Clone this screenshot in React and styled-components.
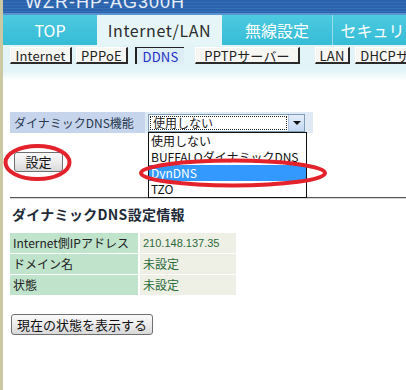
import React from 'react';
import styled, { createGlobalStyle } from 'styled-components';

const GlobalStyle = createGlobalStyle`
  body {
    margin: 0;
    background: #ffffff;
    font-family: "Noto Sans CJK JP", "Noto Sans", sans-serif;
    color: #222;
  }
`;

const Page = styled.div`
  position: relative;
  width: 406px;
  height: 390px;
  overflow: hidden;
  box-sizing: border-box;
  border-left: 3px solid #cbc8a4;
  background: #fff;
`;

const Header = styled.div`
  height: 13px;
  overflow: hidden;
  background: repeating-linear-gradient(
    180deg,
    #2c62ac 0px,
    #2c62ac 2px,
    #3670b6 2px,
    #3670b6 3px
  );
  border-bottom: 2px solid #5a94d0;
`;

const HeaderTitle = styled.div`
  margin: -8px 0 0 22px;
  font-family: "Liberation Sans", Arial, sans-serif;
  font-size: 18px;
  line-height: 20px;
  color: #e8eef8;
  letter-spacing: 1px;
  white-space: nowrap;
`;

const TabBar = styled.div`
  display: flex;
  height: 30px;
  background: #3ec2da;
`;

const Tab = styled.div`
  flex: 0 0 ${p => p.w}px;
  display: flex;
  align-items: center;
  justify-content: center;
  font-size: 16px;
  line-height: 18px;
  letter-spacing: ${p => (p.active ? '0.6px' : '0')};
  color: ${p => (p.active ? '#2c2c2c' : '#ffffff')};
  background: ${p =>
    p.active ? '#e6f6f8' : 'linear-gradient(180deg, #4ccae0 0%, #36bcd6 100%)'};
  border-right: ${p => (p.sep ? '1px solid #9adcea' : 'none')};
  white-space: nowrap;
  overflow: hidden;
`;

const SubBar = styled.div`
  height: 36px;
  padding: 2px 0 0 7px;
  box-sizing: border-box;
  display: flex;
  align-items: flex-start;
  overflow: hidden;
  background: linear-gradient(180deg, #e2f4f8 0%, #e2f4f8 70%, #ffffff 100%);
`;

const SubTab = styled.div`
  flex: 0 0 ${p => p.w}px;
  margin-left: ${p => p.ml || 0}px;
  height: 17px;
  box-sizing: border-box;
  display: flex;
  align-items: center;
  justify-content: center;
  font-size: 13px;
  line-height: 13px;
  letter-spacing: 0.2px;
  white-space: nowrap;
  color: ${p => (p.active ? '#1d2fc8' : '#222')};
  background: ${p => (p.active ? '#dcedf4' : '#f6f6f2')};
  border-style: solid;
  border-width: ${p => (p.active ? '1px 0 0 2px' : '1px 2px 2px 1px')};
  border-color: ${p => (p.active ? '#222' : '#fff #2a2a2a #2a2a2a #fff')};
`;

const Content = styled.div`
  padding: 31px 0 0 7px;
`;

const FormRow = styled.div`
  position: relative;
  display: flex;
  height: 21px;
`;

const LabelCell = styled.div`
  width: 135px;
  display: flex;
  align-items: center;
  padding-left: 4px;
  box-sizing: border-box;
  background: #c6d5ec;
  color: #283850;
  font-size: 12px;
  line-height: 14px;
  white-space: nowrap;
`;

const ValueCell = styled.div`
  width: 168px;
  display: flex;
  align-items: center;
  padding-left: 3px;
  box-sizing: border-box;
  background: #dfeaf6;
`;

const Select = styled.div`
  width: 157px;
  height: 18px;
  display: flex;
  box-sizing: border-box;
  border: 1px solid #7f9db9;
  background: #fff;
`;

const SelectText = styled.div`
  flex: 1;
  margin: 1px;
  padding-left: 2px;
  display: flex;
  align-items: center;
  font-size: 12px;
  line-height: 14px;
  border: 1px dotted #222;
`;

const SelectArrow = styled.div`
  width: 15px;
  display: flex;
  align-items: center;
  justify-content: center;
  background: linear-gradient(180deg, #e4eefa 0%, #c4d8f2 100%);
  border-left: 1px solid #b0c4e0;
`;

const Triangle = styled.div`
  width: 0;
  height: 0;
  border-left: 4px solid transparent;
  border-right: 4px solid transparent;
  border-top: 4px solid #111;
`;

const DropList = styled.div`
  position: absolute;
  left: 138px;
  top: 20px;
  width: 159px;
  box-sizing: border-box;
  border: 1px solid #111;
  background: #fff;
  z-index: 2;
`;

const DropItem = styled.div`
  height: 16px;
  padding-left: 2px;
  display: flex;
  align-items: center;
  font-size: 12px;
  line-height: 14px;
  white-space: nowrap;
  overflow: hidden;
  color: ${p => (p.hl ? '#fff' : '#111')};
  background: ${p => (p.hl ? '#3399ff' : '#fff')};
`;

const GrayButton = styled.button`
  display: flex;
  align-items: center;
  justify-content: center;
  width: ${p => p.w}px;
  height: ${p => p.h}px;
  margin: ${p => p.m};
  padding: 0;
  font-family: "Noto Sans CJK JP", sans-serif;
  font-size: 13px;
  line-height: 14px;
  color: #111;
  border: 1px solid #707070;
  border-radius: 3px;
  background: linear-gradient(180deg, #fafafa 0%, #ececec 50%, #d8d8d8 100%);
`;

const Rule = styled.div`
  margin-top: 25px;
  height: 1px;
  background: #555;
  border-bottom: 1px solid #d8d8d8;
`;

const Heading = styled.div`
  margin: 6px 0 0 2px;
  font-size: 14px;
  line-height: 18px;
  font-weight: bold;
  color: #1e2a38;
  letter-spacing: 0.3px;
  white-space: nowrap;
`;

const InfoTable = styled.div`
  margin-top: 10px;
  display: grid;
  grid-template-columns: 128px 96px;
  gap: 1px 2px;
  width: 226px;
`;

const Key = styled.div`
  height: 20px;
  display: flex;
  align-items: center;
  padding-left: 3px;
  background: #bfe3cb;
  font-size: 12px;
  line-height: 14px;
  white-space: nowrap;
  color: #222;
`;

const Val = styled.div`
  height: 20px;
  display: flex;
  align-items: center;
  padding-left: 3px;
  background: #eef0e6;
  white-space: nowrap;
  font-size: ${p => (p.small ? 11 : 12)}px;
  line-height: 14px;
  font-family: ${p => (p.small ? '"Liberation Sans", Arial, sans-serif' : 'inherit')};
  color: #2b6a3a;
`;

const Marks = styled.svg`
  position: absolute;
  left: -3px;
  top: 0;
  pointer-events: none;
  z-index: 5;
`;

const subTabs = [
  { label: 'Internet', w: 62, ml: 0 },
  { label: 'PPPoE', w: 52, ml: 4 },
  { label: 'DDNS', w: 49, ml: 7, active: true },
  { label: 'PPTPサーバー', w: 105, ml: 11 },
  { label: 'LAN', w: 35, ml: 15 },
  { label: 'DHCPサーバー', w: 100, ml: 5 },
];

const rows = [
  { k: 'Internet側IPアドレス', v: '210.148.137.35', small: true },
  { k: 'ドメイン名', v: '未設定' },
  { k: '状態', v: '未設定' },
];

export default function App() {
  return (
    <>
      <GlobalStyle />
      <Page>
        <Header>
          <HeaderTitle>WZR-HP-AG300H</HeaderTitle>
        </Header>
        <TabBar>
          <Tab w={94}>TOP</Tab>
          <Tab w={125} active>
            Internet/LAN
          </Tab>
          <Tab w={110} sep>
            無線設定
          </Tab>
          <Tab w={110}>セキュリティ</Tab>
        </TabBar>
        <SubBar>
          {subTabs.map(t => (
            <SubTab key={t.label} w={t.w} ml={t.ml} active={t.active}>
              {t.label}
            </SubTab>
          ))}
        </SubBar>
        <Content>
          <FormRow>
            <LabelCell>ダイナミックDNS機能</LabelCell>
            <ValueCell>
              <Select>
                <SelectText>使用しない</SelectText>
                <SelectArrow>
                  <Triangle />
                </SelectArrow>
              </Select>
            </ValueCell>
            <DropList>
              <DropItem>使用しない</DropItem>
              <DropItem>BUFFALOダイナミックDNS</DropItem>
              <DropItem hl>DynDNS</DropItem>
              <DropItem>TZO</DropItem>
            </DropList>
          </FormRow>
          <GrayButton w={49} h={20} m="19px 0 0 4px">
            設定
          </GrayButton>
          <Rule />
          <Heading>ダイナミックDNS設定情報</Heading>
          <InfoTable>
            {rows.map(r => (
              <React.Fragment key={r.k}>
                <Key>{r.k}</Key>
                <Val small={r.small}>{r.v}</Val>
              </React.Fragment>
            ))}
          </InfoTable>
          <GrayButton w={142} h={21} m="19px 0 0 1px">
            現在の状態を表示する
          </GrayButton>
        </Content>
        <Marks width="406" height="390" viewBox="0 0 406 390">
          <ellipse cx="37.5" cy="162.5" rx="32" ry="16.5" fill="none" stroke="#e3222c" strokeWidth="4" />
          <ellipse cx="233" cy="173" rx="92" ry="12.5" fill="none" stroke="#e3222c" strokeWidth="4" />
        </Marks>
      </Page>
    </>
  );
}
